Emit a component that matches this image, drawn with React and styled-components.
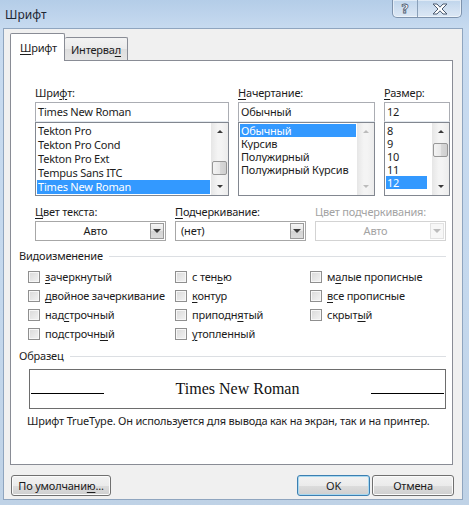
import styled, { createGlobalStyle } from 'styled-components';

const GlobalStyle = createGlobalStyle`
    html, body {
        margin: 0;
        padding: 0;
        background: #c3d7ec;
    }
    * {
        box-sizing: border-box;
    }
`;

const fontList = ['Tekton Pro', 'Tekton Pro Cond', 'Tekton Pro Ext', 'Tempus Sans ITC', 'Times New Roman'];
const styleList = ['Обычный', 'Курсив', 'Полужирный', 'Полужирный Курсив'];
const sizeList = ['8', '9', '10', '11', '12'];

// [before, underlined letter, after]
const effects = [
    ['', 'з', 'ачеркнутый'], ['с тен', 'ь', 'ю'], ['м', 'а', 'лые прописные'],
    ['', 'д', 'войное зачеркивание'], ['', 'к', 'онтур'], ['', 'в', 'се прописные'],
    ['над', 'с', 'трочный'], ['приподн', 'я', 'тый'], ['скрыт', 'ы', 'й'],
    ['подстрочн', 'ы', 'й'], ['', 'у', 'топленный'], null,
];

export default function App() {
    return (
        <>
            <GlobalStyle />
            <Window>
                <TitleBar>
                    <Title>Шрифт</Title>
                    <CaptionButtons>
                        <CaptionButton $width={25}>
                            <HelpGlyph>?</HelpGlyph>
                        </CaptionButton>
                        <CaptionButton $width={43} $last>
                            <svg width="18" height="12" viewBox="0 0 18 12">
                                <polygon
                                    points="2,1 6,1 9,4.2 12,1 16,1 11,6 16,11 12,11 9,7.8 6,11 2,11 7,6"
                                    fill="#fff"
                                    stroke="#4b5a70"
                                    strokeWidth="1"
                                    strokeLinejoin="round"
                                />
                            </svg>
                        </CaptionButton>
                    </CaptionButtons>
                </TitleBar>

                <Face>
                    <Tabs>
                        <Tab $active $width={55}><U>Ш</U>рифт</Tab>
                        <Tab $width={63}>Интерва<U>л</U></Tab>
                    </Tabs>

                    <Panel>
                        <FontRow>
                            <Field $width={194}>
                                <Label>Шри<U>ф</U>т:</Label>
                                <TextBox>Times New Roman</TextBox>
                                <ListBox>
                                    <Items>
                                        {fontList.map(f => (
                                            <Item key={f} $row={14} $selected={f === 'Times New Roman'}>{f}</Item>
                                        ))}
                                    </Items>
                                    <ScrollBar thumbOffset={21} />
                                </ListBox>
                            </Field>
                            <Field $width={137}>
                                <Label><U>Н</U>ачертание:</Label>
                                <TextBox>Обычный</TextBox>
                                <ListBox>
                                    <Items>
                                        {styleList.map(s => (
                                            <Item key={s} $row={13} $selected={s === 'Обычный'}>{s}</Item>
                                        ))}
                                    </Items>
                                    <ScrollBar disabled />
                                </ListBox>
                            </Field>
                            <Field $width={66}>
                                <Label><U>Р</U>азмер:</Label>
                                <TextBox>12</TextBox>
                                <ListBox>
                                    <Items>
                                        {sizeList.map(s => (
                                            <Item key={s} $row={13} $narrow $selected={s === '12'}>{s}</Item>
                                        ))}
                                    </Items>
                                    <ScrollBar thumbOffset={3} />
                                </ListBox>
                            </Field>
                        </FontRow>

                        <ComboRow>
                            <Field $width={131}>
                                <Label><U>Ц</U>вет текста:</Label>
                                <Combo>
                                    <ComboValue $center>Авто</ComboValue>
                                    <DropButton><Arrow /></DropButton>
                                </Combo>
                            </Field>
                            <Field $width={131}>
                                <Label><U>П</U>одчеркивание:</Label>
                                <Combo>
                                    <ComboValue>(нет)</ComboValue>
                                    <DropButton><Arrow /></DropButton>
                                </Combo>
                            </Field>
                            <Field $width={131}>
                                <Label $disabled>Цвет подчеркивания:</Label>
                                <Combo $disabled>
                                    <ComboValue $center $disabled>Авто</ComboValue>
                                    <DropButton $disabled><Arrow $disabled /></DropButton>
                                </Combo>
                            </Field>
                        </ComboRow>

                        <Group>
                            <GroupHeader>Видоизменение</GroupHeader>
                            <CheckGrid>
                                {effects.map((e, i) => (
                                    e ? (
                                        <CheckItem key={i}>
                                            <CheckBox />
                                            <span>{e[0]}<U>{e[1]}</U>{e[2]}</span>
                                        </CheckItem>
                                    ) : <span key={i} />
                                ))}
                            </CheckGrid>
                        </Group>

                        <Group $sample>
                            <GroupHeader>Образец</GroupHeader>
                            <Preview>
                                <SampleLine />
                                <SampleText>Times New Roman</SampleText>
                                <SampleLine />
                            </Preview>
                            <Note>Шрифт TrueType. Он используется для вывода как на экран, так и на принтер.</Note>
                        </Group>
                    </Panel>

                    <ButtonRow>
                        <Button $width={100}>По умолчани<U>ю</U>...</Button>
                        <Spacer />
                        <Button $width={73} $primary>OK</Button>
                        <Button $width={82}>Отмена</Button>
                    </ButtonRow>
                </Face>
            </Window>
        </>
    );
}

function ScrollBar({ thumbOffset, disabled }) {
    return (
        <Scroll>
            <ScrollArrow><Arrow $up $small $disabled={disabled} /></ScrollArrow>
            <Track>
                {!disabled && <Thumb style={{ marginTop: thumbOffset }} />}
            </Track>
            <ScrollArrow><Arrow $small $disabled={disabled} /></ScrollArrow>
        </Scroll>
    );
}

const ui = `"Noto Sans", "Open Sans", sans-serif`;

const Window = styled.div`
    width: 469px;
    height: 505px;
    display: flex;
    flex-direction: column;
    background: linear-gradient(180deg, #b4cde8 0%, #c8dbf0 6%, #c4d8ed 60%, #bfd2e6 100%);
    font-family: ${ui};
    font-size: 11px;
    letter-spacing: -0.2px;
    color: #1c1c1c;
    overflow: hidden;
`;

const TitleBar = styled.div`
    height: 28px;
    display: flex;
    align-items: flex-start;
    justify-content: space-between;
    padding: 0 7px 0 5px;
`;

const Title = styled.div`
    margin-top: 6px;
    font-size: 12px;
    letter-spacing: 0;
    color: #1e2733;
`;

const CaptionButtons = styled.div`
    display: flex;
    height: 18px;
    border: 1px solid #7e93ad;
    border-top: none;
    border-radius: 0 0 5px 5px;
    background: linear-gradient(180deg, rgba(255,255,255,0.15), rgba(255,255,255,0.45));
    box-shadow: inset 0 0 0 1px rgba(255,255,255,0.5);
    overflow: hidden;
`;

const CaptionButton = styled.div`
    width: ${p => p.$width}px;
    display: flex;
    align-items: center;
    justify-content: center;
    border-right: ${p => (p.$last ? 'none' : '1px solid #8aa0b9')};
`;

const HelpGlyph = styled.span`
    font-family: "DejaVu Sans", sans-serif;
    font-weight: bold;
    font-size: 13px;
    color: #fff;
    -webkit-text-stroke: 0.8px #4b5a70;
    line-height: 1;
`;

const Face = styled.div`
    width: 460px;
    height: 472px;
    margin-left: 3px;
    background: #f0f0f0;
    border: 1px solid #8fa5bf;
    padding: 4px 9px 0 6px;
    display: flex;
    flex-direction: column;
`;

const Tabs = styled.div`
    display: flex;
    align-items: flex-end;
`;

const Tab = styled.div`
    position: relative;
    z-index: ${p => (p.$active ? 1 : 0)};
    width: ${p => p.$width}px;
    height: ${p => (p.$active ? 28 : 23)}px;
    margin-bottom: ${p => (p.$active ? -1 : 0)}px;
    padding: ${p => (p.$active ? '6px 0 0 9px' : '4px 0 0 6px')};
    border: 1px solid #898c95;
    border-bottom: none;
    border-left: ${p => (p.$active ? '1px solid #898c95' : 'none')};
    border-radius: 2px 2px 0 0;
    white-space: nowrap;
    background: ${p => (p.$active ? '#fff' : 'linear-gradient(180deg, #f3f3f3 0%, #ebebeb 50%, #dedede 51%, #e5e5e5 100%)')};
`;

const Panel = styled.div`
    height: 405px;
    background: #fff;
    border: 1px solid #898c95;
    display: flex;
    flex-direction: column;
`;

const FontRow = styled.div`
    display: flex;
    gap: 9px;
    padding: 25px 0 0 24px;
`;

const ComboRow = styled.div`
    display: flex;
    gap: 9px;
    padding: 9px 0 0 24px;
`;

const Field = styled.div`
    width: ${p => p.$width}px;
    display: flex;
    flex-direction: column;
`;

const Label = styled.div`
    height: 14px;
    line-height: 14px;
    margin-bottom: 2px;
    color: ${p => (p.$disabled ? '#a3a3a3' : 'inherit')};
    white-space: nowrap;
`;

const TextBox = styled.div`
    height: 20px;
    border: 1px solid #abadb3;
    border-bottom-color: #e3e9ef;
    padding: 0 2px;
    line-height: 18px;
    background: #fff;
`;

const ListBox = styled.div`
    height: 74px;
    border: 1px solid #828790;
    display: flex;
    background: #fff;
`;

const Items = styled.div`
    flex: 1;
    min-width: 0;
    padding: 1px 1px 0 1px;
    overflow: hidden;
`;

const Item = styled.div`
    height: ${p => p.$row}px;
    line-height: ${p => p.$row}px;
    padding-left: 1px;
    white-space: nowrap;
    overflow: hidden;
    margin-right: ${p => (p.$narrow ? 4 : 0)}px;
    background: ${p => (p.$selected ? '#3399ff' : 'transparent')};
    color: ${p => (p.$selected ? '#fff' : 'inherit')};
`;

const Scroll = styled.div`
    width: 17px;
    flex-shrink: 0;
    display: flex;
    flex-direction: column;
    background: linear-gradient(90deg, #e6e6e6, #f4f4f4 40%, #f4f4f4 60%, #ececec);
`;

const ScrollArrow = styled.div`
    height: 17px;
    display: flex;
    align-items: center;
    justify-content: center;
`;

const Track = styled.div`
    flex: 1;
    display: flex;
    flex-direction: column;
    align-items: center;
`;

const Thumb = styled.div`
    width: 15px;
    height: 14px;
    border: 1px solid #979797;
    border-radius: 2px;
    background: linear-gradient(90deg, #f3f3f3, #e8e8e8 50%, #d9d9d9 51%, #cfcfcf);
`;

const Arrow = styled.span`
    width: 0;
    height: 0;
    border-left: ${p => (p.$small ? 3 : 4)}px solid transparent;
    border-right: ${p => (p.$small ? 3 : 4)}px solid transparent;
    border-top: ${p => (p.$up ? 'none' : `${p.$small ? 3 : 4}px solid ${p.$disabled ? '#bcbcbc' : '#3a3a3a'}`)};
    border-bottom: ${p => (p.$up ? `${p.$small ? 3 : 4}px solid ${p.$disabled ? '#bcbcbc' : '#3a3a3a'}` : 'none')};
`;

const Combo = styled.div`
    height: 20px;
    border: 1px solid ${p => (p.$disabled ? '#d3d3d3' : '#a7a7a7')};
    display: flex;
    align-items: stretch;
    padding: 1px;
    background: #fff;
`;

const ComboValue = styled.div`
    flex: 1;
    line-height: 16px;
    padding-left: 4px;
    text-align: ${p => (p.$center ? 'center' : 'left')};
    color: ${p => (p.$disabled ? '#a3a3a3' : 'inherit')};
`;

const DropButton = styled.div`
    width: 14px;
    display: flex;
    align-items: center;
    justify-content: center;
    border: 1px solid ${p => (p.$disabled ? '#e2e2e2' : '#9a9a9a')};
    background: ${p => (p.$disabled ? '#f7f7f7' : 'linear-gradient(180deg, #f6f6f6, #e4e4e4 50%, #d4d4d4 51%, #dcdcdc)')};
`;

const Group = styled.div`
    display: flex;
    flex-direction: column;
    margin-top: ${p => (p.$sample ? 6 : 8)}px;
    padding: 0 6px 0 8px;
`;

const GroupHeader = styled.div`
    height: 14px;
    line-height: 14px;
    display: flex;
    align-items: center;
    gap: 6px;
    &::after {
        content: '';
        flex: 1;
        height: 1px;
        background: #dcdfe3;
    }
`;

const CheckGrid = styled.div`
    display: grid;
    grid-template-columns: 147px 135px 1fr;
    grid-auto-rows: 19px;
    margin-top: 4px;
    padding-left: 9px;
`;

const CheckItem = styled.label`
    display: flex;
    align-items: center;
    gap: 5px;
    white-space: nowrap;
`;

const CheckBox = styled.span`
    width: 12px;
    height: 12px;
    border: 1px solid #8f8f8f;
    background: linear-gradient(135deg, #d9d9d9, #f3f3f3);
    box-shadow: inset 0 0 0 1px #f7f7f7;
    flex-shrink: 0;
`;

const Preview = styled.div`
    width: 417px;
    height: 40px;
    margin: 6px 0 0 10px;
    border: 1px solid #6d6d6d;
    display: flex;
    justify-content: space-between;
    align-items: flex-end;
    padding: 0 1px 14px 1px;
`;

const SampleLine = styled.span`
    width: 73px;
    height: 1px;
    background: #000;
`;

const SampleText = styled.span`
    font-family: "Liberation Serif", "Times New Roman", serif;
    font-size: 16px;
    line-height: 16px;
    letter-spacing: 0;
    color: #111;
    margin-bottom: -3px;
`;

const Note = styled.div`
    margin: 5px 0 0 8px;
    height: 14px;
    line-height: 14px;
    white-space: nowrap;
`;

const ButtonRow = styled.div`
    display: flex;
    gap: 2px;
    margin: 10px -1px 0 1px;
`;

const Spacer = styled.div`
    flex: 1;
`;

const Button = styled.div`
    width: ${p => p.$width}px;
    height: 21px;
    display: flex;
    align-items: center;
    justify-content: center;
    border: 1px solid ${p => (p.$primary ? '#3c7fb1' : '#707070')};
    border-radius: 3px;
    background: linear-gradient(180deg, #f2f2f2 0%, #ebebeb 50%, #dddddd 51%, #cfcfcf 100%);
    box-shadow: inset 0 0 0 1px ${p => (p.$primary ? '#a8d8f0' : '#fbfbfb')};
`;

const U = styled.span`
    text-decoration: underline;
    text-underline-offset: 2px;
`;
